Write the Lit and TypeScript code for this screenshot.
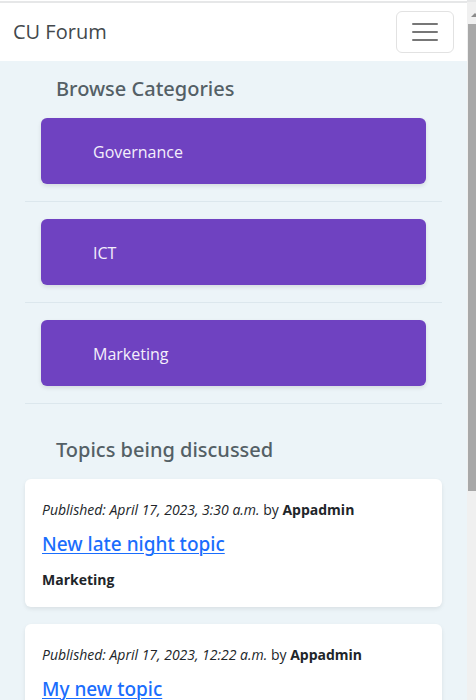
import { LitElement, html, css } from "lit";
import { customElement, state } from "lit/decorators.js";

interface Topic {
  published: string;
  author: string;
  title: string;
  category: string;
}

@customElement("app-root")
export class AppRoot extends LitElement {
  @state() private categories = ["Governance", "ICT", "Marketing"];

  @state() private topics: Topic[] = [
    { published: "April 17, 2023, 3:30 a.m.", author: "Appadmin", title: "New late night topic", category: "Marketing" },
    { published: "April 17, 2023, 12:22 a.m.", author: "Appadmin", title: "My new topic", category: "ICT" },
  ];

  static styles = css`
    :host {
      display: flex;
      height: 100vh;
      overflow: hidden;
      background: #ecf4f8;
      color: #212529;
      font-family: "Open Sans", "Noto Sans", sans-serif;
      font-size: 14px;
      line-height: 24px;
    }
    * {
      box-sizing: border-box;
    }
    .page {
      flex: 1;
      min-width: 0;
      overflow: hidden;
    }
    .navbar {
      display: flex;
      align-items: center;
      justify-content: space-between;
      height: 61px;
      padding: 2px 13px 0;
      border-top: 1px solid #fff;
      box-shadow: inset 0 2px #e6e7e8;
      background: #fff;
    }
    .brand {
      color: #43484c;
      font-size: 20px;
      line-height: 32px;
      text-decoration: none;
    }
    .toggler {
      display: flex;
      align-items: center;
      justify-content: center;
      width: 58px;
      height: 42px;
      padding: 0;
      border: 1px solid #e2e2e2;
      border-radius: 6px;
      background: #fff;
    }
    .content {
      padding: 12px 25px 0;
    }
    h2 {
      margin: 0;
      padding: 0 31px;
      color: #546066;
      font-family: "Noto Sans", "Open Sans", sans-serif;
      font-size: 20px;
      font-weight: 500;
      line-height: 32px;
    }
    .categories {
      margin: 13px 0 30px;
      padding: 0;
      list-style: none;
    }
    .categories li {
      padding: 0 16px 17px;
      margin-bottom: 17px;
      border-bottom: 1px solid #dce7ed;
    }
    .category {
      display: block;
      padding: 22px 52px 20px;
      border-radius: 6px;
      background: #6f42c1;
      box-shadow: 0 2px 4px rgba(0, 0, 0, 0.1);
      color: #f4effb;
      font-size: 16px;
      text-decoration: none;
    }
    .topics {
      display: flex;
      flex-direction: column;
      gap: 17px;
      margin-top: 13px;
    }
    .topic {
      padding: 19px 17px 15px;
      border-radius: 6px;
      background: #fff;
      box-shadow: 0 2px 4px rgba(0, 0, 0, 0.08);
    }
    .topic p {
      margin: 0;
    }
    h3 {
      margin: 6px 0 8px;
      font-family: "Noto Sans", "Open Sans", sans-serif;
      font-size: 19px;
      font-weight: 500;
      line-height: 32px;
    }
    h3 a {
      color: #1a6dfd;
      text-decoration-thickness: 1px;
      text-underline-offset: 2px;
    }
    .scrollbar {
      display: flex;
      flex-direction: column;
      width: 9px;
      padding-top: 3px;
      overflow: hidden;
      background: #f0f0f0;
      box-shadow: inset 0 2px #e6e7e8;
    }
    .arrow {
      flex: none;
      width: 17px;
      height: 21px;
    }
    .thumb {
      height: 67%;
      margin-left: 1px;
      background: #a8a8a8;
    }
  `;

  render() {
    return html`
      <div class="page">
        <header class="navbar">
          <a class="brand" href="#">CU Forum</a>
          <button class="toggler" type="button" aria-label="Toggle navigation">
            <svg width="30" height="30" viewBox="0 0 30 30" fill="none" stroke="#777" stroke-width="2" stroke-linecap="round" aria-hidden="true">
              <path d="M3 7h24M3 15h24M3 23h24" />
            </svg>
          </button>
        </header>
        <main class="content">
          <h2>Browse Categories</h2>
          <ul class="categories">
            ${this.categories.map((name) => html`<li><a class="category" href="#">${name}</a></li>`)}
          </ul>
          <h2>Topics being discussed</h2>
          <div class="topics">
            ${this.topics.map(
              (t) => html`
                <article class="topic">
                  <p><em>Published: ${t.published}</em> by <strong>${t.author}</strong></p>
                  <h3><a href="#">${t.title}</a></h3>
                  <p><strong>${t.category}</strong></p>
                </article>
              `
            )}
          </div>
        </main>
      </div>
      <div class="scrollbar" aria-hidden="true">
        <svg class="arrow" viewBox="0 0 17 21"><path d="M4 14 8 10l4 4z" fill="#8b8b8b" /></svg>
        <div class="thumb"></div>
      </div>
    `;
  }
}
